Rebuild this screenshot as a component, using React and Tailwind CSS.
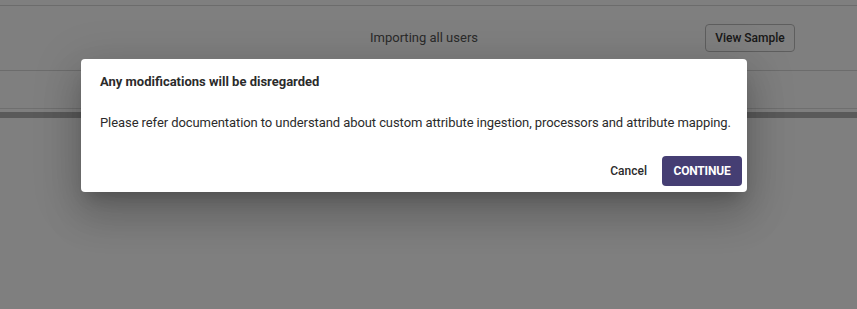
export default function App() {
  return (
    <div className="relative h-[309px] w-full overflow-hidden bg-white font-['Roboto',sans-serif]">
      {/* page under the dialog */}
      <div className="pt-[5px]">
        <div className="flex h-[66px] items-center border-y border-[#d9d9d9] pl-[143px] pr-[62px]">
          <p className="flex-1 text-center text-[13px] text-[#555]">
            Importing all users
          </p>
          <button
            type="button"
            className="h-[28px] w-[90px] rounded border border-[#bdbdbd] text-[12px] font-medium text-[#333]"
          >
            View Sample
          </button>
        </div>
        <div className="h-[38px] border-b border-[#dedede]" />
        <div className="mt-[3px] h-[6px] bg-[#b5b5b5]" />
      </div>

      {/* backdrop */}
      <div className="absolute inset-0 bg-black/50" />

      {/* dialog */}
      <div className="absolute left-[81px] top-[59px] w-[666px] rounded bg-white pb-[6px] shadow-[0_11px_15px_-7px_rgba(0,0,0,0.2),0_24px_38px_3px_rgba(0,0,0,0.14),0_9px_46px_8px_rgba(0,0,0,0.12)]">
        <div className="px-[19px] pt-[13px]">
          <h3 className="text-[13px] font-bold leading-5 text-[#2b2b2b]">
            Any modifications will be disregarded
          </h3>
          <p className="mt-[21px] whitespace-nowrap text-[13px] leading-5 tracking-[-0.08px] text-[#2b2b2b]">
            Please refer documentation to understand about custom attribute
            ingestion, processors and attribute mapping.
          </p>
        </div>
        <div className="mt-[23px] flex items-center justify-end pr-[5px]">
          <button
            type="button"
            className="mr-[7px] h-[30px] px-2 text-[12px] font-medium text-[#2b2b2b]"
          >
            Cancel
          </button>
          <button
            type="button"
            className="h-[30px] w-[80px] rounded bg-[#453e73] text-[12px] font-bold uppercase tracking-[-0.2px] text-white"
          >
            Continue
          </button>
        </div>
      </div>
    </div>
  );
}
